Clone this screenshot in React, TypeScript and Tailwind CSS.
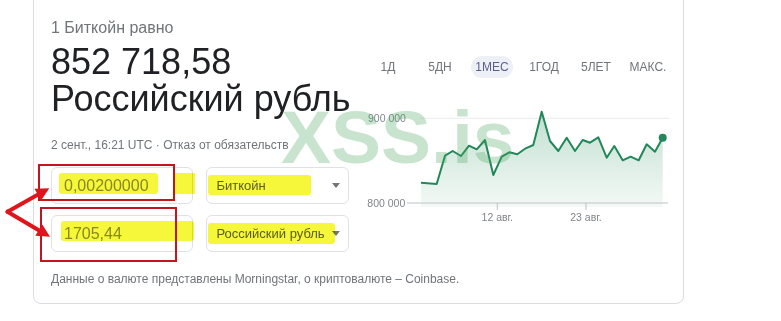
import React from "react";

const pts: [number, number][] = [
  [61, 82.7], [76.7, 84], [85, 55.7], [92.7, 51], [101, 56], [109, 45.7], [116.7, 49.3],
  [125, 40], [133.3, 75], [141.7, 56.7], [149.3, 52.3], [157.3, 54.3], [165.7, 48.3],
  [173.3, 45], [181.7, 11.7], [190, 41], [198.3, 51], [206.7, 37.7], [215, 51],
  [222.7, 40], [230, 42.7], [238.3, 37.3], [246.7, 57.7], [254.3, 46], [262.7, 60.3],
  [270.7, 56.7], [278.7, 60.3], [286.7, 44.3], [295, 51.7], [302.7, 37.7],
];

const tabs = ["1Д", "5ДН", "1МЕС", "1ГОД", "5ЛЕТ", "МАКС."];

function Arrow() {
  return <div className="w-0 h-0 border-l-[4.5px] border-r-[4.5px] border-t-[5px] border-l-transparent border-r-transparent border-t-[#70757a]" />;
}

export default function App() {
  const line = pts.map((p) => p.join(",")).join(" ");
  const area = `61,107 ${line} 302.7,107`;
  const svgFont = "Liberation Sans, Arial, sans-serif";
  return (
    <div className="relative w-[781px] h-[321px] overflow-hidden bg-white font-['Liberation_Sans',Arial,sans-serif]">
      <div className="ml-[33px] mt-[-10px] w-[651px] h-[314px] rounded-lg border border-[#dadce0] bg-white">
        <div className="flex pt-[27px]">
          <div className="w-[315px] shrink-0 pl-[17px]">
            <div className="text-[16px] leading-[20px] text-[#70757a] whitespace-nowrap">1 Биткойн равно</div>
            <div className="mt-[6px] text-[36px] leading-[36px] text-[#202124] whitespace-nowrap">852 718,58</div>
            <div className="mt-[1px] text-[36px] leading-[36px] text-[#202124] whitespace-nowrap">Российский рубль</div>
            <div className="mt-[20px] text-[12px] leading-[16px] text-[#70757a] whitespace-nowrap">
              2 сент., 16:21 UTC · Отказ от обязательств
            </div>
            <div className="mt-[14px] flex flex-col gap-[11px]">
              <div className="flex gap-[13px]">
                <div className="w-[143px] h-[37px] rounded-[6px] border border-[#dfe1e5] pl-[12px] flex items-center text-[16px] text-[#8e8e8e]">
                  0,00200000
                </div>
                <div className="w-[143px] h-[37px] rounded-[6px] border border-[#dfe1e5] pl-[9px] pr-[8px] flex items-center justify-between text-[13px] text-[#5f6368]">
                  <span>Биткойн</span>
                  <Arrow />
                </div>
              </div>
              <div className="flex gap-[13px]">
                <div className="w-[143px] h-[37px] rounded-[6px] border border-[#dfe1e5] pl-[12px] flex items-center text-[16px] text-[#8e8e8e]">
                  1705,44
                </div>
                <div className="w-[143px] h-[37px] rounded-[6px] border border-[#dfe1e5] pl-[9px] pr-[8px] flex items-center justify-between text-[13px] text-[#5f6368] whitespace-nowrap">
                  <span>Российский рубль</span>
                  <Arrow />
                </div>
              </div>
            </div>
          </div>
          <div className="flex-1 pl-[11px]">
            <div className="mt-[38px] flex pl-[2px] text-[12px] text-[#70757a]">
              {tabs.map((t) => (
                <div key={t} className="w-[52px] flex justify-center">
                  {t === "1МЕС" ? (
                    <span className="h-[22px] leading-[22px] px-[4.5px] rounded-full bg-[#eef0f7] text-[#5a5f8c]">{t}</span>
                  ) : (
                    <span className="h-[22px] leading-[22px]">{t}</span>
                  )}
                </div>
              ))}
            </div>
            <svg width="320" height="125" viewBox="0 0 320 125" className="mt-[22px] block">
              <defs>
                <linearGradient id="g" x1="0" y1="10" x2="0" y2="107" gradientUnits="userSpaceOnUse">
                  <stop offset="0" stopColor="#1e8c55" stopOpacity="0.28" />
                  <stop offset="1" stopColor="#1e8c55" stopOpacity="0.05" />
                </linearGradient>
              </defs>
              <line x1="60" y1="18.3" x2="310" y2="18.3" stroke="#ebebeb" strokeWidth="1" />
              <text x="8" y="22" fontSize="10.5" fill="#80868b" fontFamily={svgFont}>900 000</text>
              <polygon points={area} fill="url(#g)" />
              <line x1="47" y1="103" x2="308" y2="103" stroke="#bdc1c6" strokeWidth="1.2" />
              <line x1="137.3" y1="103" x2="137.3" y2="110" stroke="#bdc1c6" strokeWidth="1" />
              <line x1="226" y1="103" x2="226" y2="110" stroke="#bdc1c6" strokeWidth="1" />
              <text x="7.3" y="107" fontSize="10.5" fill="#80868b" fontFamily={svgFont}>800 000</text>
              <text x="137.3" y="120.5" fontSize="10.5" fill="#80868b" textAnchor="middle" fontFamily={svgFont}>12 авг.</text>
              <text x="226" y="120.5" fontSize="10.5" fill="#80868b" textAnchor="middle" fontFamily={svgFont}>23 авг.</text>
              <polyline points={line} fill="none" stroke="#22875a" strokeWidth="2" strokeLinejoin="round" />
              <circle cx="302.7" cy="37.7" r="4" fill="#22875a" />
            </svg>
          </div>
        </div>
        <div className="mt-[19px] pl-[17px] text-[12px] leading-[16px] text-[#70757a] whitespace-nowrap">
          Данные о валюте представлены Morningstar, о криптовалюте – Coinbase.
        </div>
      </div>

      {/* yellow marker highlights */}
      <div className="absolute left-[59px] top-[173px] w-[99px] h-[21px] rounded-[3px] bg-[#f6f63a] mix-blend-multiply" />
      <div className="absolute left-[175px] top-[173px] w-[20px] h-[21px] bg-[#f6f63a] mix-blend-multiply" />
      <div className="absolute left-[208px] top-[175px] w-[103px] h-[20px] rounded-[3px] bg-[#f6f63a] mix-blend-multiply" />
      <div className="absolute left-[61px] top-[221px] w-[133px] h-[20px] rounded-[3px] bg-[#f6f63a] mix-blend-multiply" />
      <div className="absolute left-[208px] top-[223px] w-[127px] h-[21px] rounded-[3px] bg-[#f6f63a] mix-blend-multiply" />

      {/* red boxes */}
      <div className="absolute left-[38px] top-[164px] w-[137px] h-[37px] border-2 border-[#c3161c]" />
      <div className="absolute left-[40px] top-[207px] w-[137px] h-[55px] border-2 border-[#c3161c]" />

      {/* red arrows */}
      <svg className="absolute left-0 top-0 pointer-events-none" width="781" height="321">
        <line x1="7.5" y1="211.7" x2="39" y2="194" stroke="#e0141b" strokeWidth="4" strokeLinecap="round" />
        <line x1="7.5" y1="211.7" x2="40" y2="231" stroke="#e0141b" strokeWidth="4" strokeLinecap="round" />
        <polygon points="49.3,188.3 41,200.5 34.5,188.8" fill="#e0141b" />
        <polygon points="50,236.7 35.3,235.8 42.3,224.4" fill="#e0141b" />
      </svg>

      {/* watermark */}
      <div className="absolute left-[281px] top-[100px] text-[75px] leading-[75px] font-bold text-[#48a65c4d] pointer-events-none whitespace-nowrap">
        XSS.is
      </div>
    </div>
  );
}
